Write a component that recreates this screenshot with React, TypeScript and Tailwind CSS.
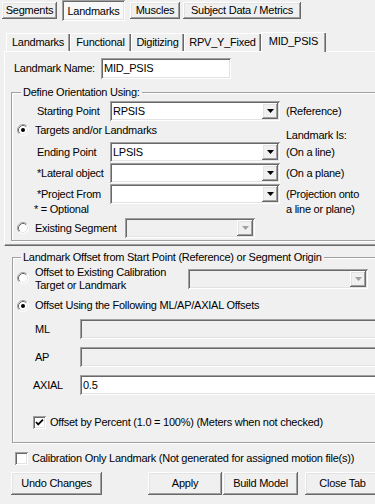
import React from "react";

const raised =
  "bg-[#f0f0f0] shadow-[inset_-1px_-1px_0_#696969,inset_1px_1px_0_#fff,inset_-2px_-2px_0_#a0a0a0,inset_2px_2px_0_#e3e3e3]";
const sunken =
  "shadow-[inset_1px_1px_0_#a0a0a0,inset_-1px_-1px_0_#fff,inset_2px_2px_0_#696969,inset_-2px_-2px_0_#e3e3e3]";
const etched = "border border-[#a0a0a0] shadow-[inset_1px_1px_0_#fff,1px_1px_0_#fff]";

function Radio({ checked = false }: { checked?: boolean }) {
  return (
    <svg width="12" height="12" viewBox="0 0 12 12" className="shrink-0">
      <circle cx="6" cy="6" r="5.5" fill="#fff" />
      <path d="M2.11 9.89 A5.5 5.5 0 0 1 9.89 2.11" fill="none" stroke="#a0a0a0" />
      <path d="M9.89 2.11 A5.5 5.5 0 0 1 2.11 9.89" fill="none" stroke="#fff" />
      <path d="M2.82 9.18 A4.5 4.5 0 0 1 9.18 2.82" fill="none" stroke="#696969" />
      <path d="M9.18 2.82 A4.5 4.5 0 0 1 2.82 9.18" fill="none" stroke="#e3e3e3" />
      {checked && <circle cx="6" cy="6" r="2" fill="#000" />}
    </svg>
  );
}

function Check({ checked = false }: { checked?: boolean }) {
  return (
    <div className={`w-[13px] h-[13px] bg-white shrink-0 ${sunken}`}>
      {checked && (
        <svg width="13" height="13" viewBox="0 0 13 13">
          <path d="M3 6 L5.2 8.4 L10 3.6" fill="none" stroke="#000" strokeWidth="1.7" />
        </svg>
      )}
    </div>
  );
}

function Combo({ value = "", width, disabled = false }: { value?: string; width: string; disabled?: boolean }) {
  return (
    <div className={`${width} h-[20px] flex p-[2px] shrink-0 ${disabled ? "bg-[#f0f0f0]" : "bg-white"} ${sunken}`}>
      <div className="flex-1 pl-[1px] leading-[16px] overflow-hidden whitespace-nowrap">{value}</div>
      <div className={`w-[16px] h-[16px] flex items-center justify-center ${raised}`}>
        <svg width="7" height="4" viewBox="0 0 7 4">
          <polygon points="0,0 7,0 3.5,4" fill={disabled ? "#a0a0a0" : "#000"} />
        </svg>
      </div>
    </div>
  );
}

function TextBox({ value = "", width, disabled = false }: { value?: string; width: string; disabled?: boolean }) {
  return (
    <div
      className={`${width} h-[20px] pl-[3px] leading-[20px] shrink-0 whitespace-nowrap ${disabled ? "bg-[#f0f0f0]" : "bg-white"} ${sunken}`}
    >
      {value}
    </div>
  );
}

function Button({ label, className = "" }: { label: string; className?: string }) {
  return (
    <div className={`h-[23px] flex items-center justify-center shrink-0 ${raised} ${className}`}>{label}</div>
  );
}

function Tab({ label, width, selected = false }: { label: string; width: string; selected?: boolean }) {
  return (
    <div
      className={`${width} ${
        selected ? "h-[20px] relative z-10 pb-[2px]" : "h-[19px]"
      } flex items-center justify-center bg-[#f0f0f0] shrink-0 shadow-[inset_1px_1px_0_#fff,inset_-1px_0_0_#696969,inset_-2px_0_0_#a0a0a0]`}
    >
      {label}
    </div>
  );
}

export default function App() {
  return (
    <div className="w-[375px] h-[504px] overflow-hidden bg-[#f0f0f0] text-black text-[11px] leading-[13px] tracking-[-0.25px] [font-family:'Liberation_Sans',Arial,sans-serif] flex flex-col">
      {/* top level tabs, drawn as buttons */}
      <div className="h-[21px] flex items-center pl-[2px] shrink-0">
        <div className={`w-[55px] h-[17px] flex items-center justify-center ${raised}`}>Segments</div>
        <div className={`ml-[5px] w-[63px] h-[21px] flex items-center justify-center pt-[1px] bg-[#f8f8f8] ${sunken}`}>
          Landmarks
        </div>
        <div className={`ml-[5px] w-[50px] h-[17px] flex items-center justify-center ${raised}`}>Muscles</div>
        <div className={`ml-[3px] w-[118px] h-[17px] flex items-center justify-center ${raised}`}>
          Subject Data / Metrics
        </div>
      </div>

      {/* landmark tabs */}
      <div className="mt-[11px] h-[20px] flex items-end pl-[6px] shrink-0">
        <Tab label="Landmarks" width="w-[64px]" />
        <Tab label="Functional" width="w-[61px]" />
        <Tab label="Digitizing" width="w-[53px]" />
        <Tab label="RPV_Y_Fixed" width="w-[77px]" />
        <Tab label="MID_PSIS" width="w-[65px]" selected />
      </div>

      {/* tab page */}
      <div className="-mt-[1px] ml-[4px] w-[390px] h-[195px] shrink-0 border-t border-l border-white border-b border-b-[#696969] shadow-[inset_0_-1px_0_#a0a0a0]">
        <div className="mt-[6px] h-[21px] flex items-center pl-[9px]">
          <div className="w-[87px]">Landmark Name:</div>
          <div className={`w-[130px] h-[21px] pl-[3px] leading-[21px] bg-white ${sunken}`}>MID_PSIS</div>
        </div>

        <div className={`relative mt-[13px] ml-[6px] w-[380px] h-[149px] ${etched}`}>
          <span className="absolute -top-[7px] left-[9px] px-[2px] bg-[#f0f0f0]">Define Orientation Using:</span>

          <div className="mt-[8px] h-[20px] flex items-center pl-[25px]">
            <div className="w-[73px]">Starting Point</div>
            <Combo value="RPSIS" width="w-[170px]" />
            <div className="ml-[6px]">(Reference)</div>
          </div>

          <div className="h-[21px] flex items-start">
            <div className="w-[274px] flex items-start">
              <div className="ml-[5px] mt-[3px]">
                <Radio checked />
              </div>
              <div className="ml-[6px] mt-[3px] w-[122px] overflow-hidden whitespace-nowrap">
                Targets and/or Landmarks
              </div>
            </div>
            <div className="mt-[8px]">Landmark Is:</div>
          </div>

          <div className="h-[20px] flex items-center pl-[25px]">
            <div className="w-[73px]">Ending Point</div>
            <Combo value="LPSIS" width="w-[170px]" />
            <div className="ml-[6px]">(On a line)</div>
          </div>

          <div className="mt-[1px] h-[20px] flex items-center pl-[25px]">
            <div className="w-[73px]">*Lateral object</div>
            <Combo width="w-[170px]" />
            <div className="ml-[6px]">(On a plane)</div>
          </div>

          <div className="mt-[1px] h-[20px] flex items-center pl-[25px]">
            <div className="w-[73px]">*Project From</div>
            <Combo width="w-[170px]" />
            <div className="ml-[6px]">(Projection onto</div>
          </div>

          <div className="-mt-[1px] h-[13px] flex">
            <div className="w-[274px] pl-[22px]">* = Optional</div>
            <div>a line or plane)</div>
          </div>

          <div className="mt-[2px] h-[20px] flex items-center">
            <div className="ml-[5px]">
              <Radio />
            </div>
            <div className="ml-[6px] w-[90px]">Existing Segment</div>
            <Combo width="w-[130px]" disabled />
          </div>
        </div>
      </div>

      {/* offset group */}
      <div className={`relative mt-[11px] ml-[12px] w-[380px] h-[186px] shrink-0 ${etched}`}>
        <span className="absolute -top-[7px] left-[8px] px-[2px] bg-[#f0f0f0] whitespace-nowrap">
          Landmark Offset from Start Point (Reference) or Segment Origin
        </span>

        <div className="mt-[8px] h-[26px] flex items-start">
          <div className="ml-[4px] mt-[6px]">
            <Radio />
          </div>
          <div className="ml-[6px] w-[153px]">
            <div>Offset to Existing Calibration</div>
            <div>Target or Landmark</div>
          </div>
          <div className="mt-[3px]">
            <Combo width="w-[180px]" disabled />
          </div>
        </div>

        <div className="mt-[7px] h-[13px] flex items-center">
          <div className="ml-[4px]">
            <Radio checked />
          </div>
          <div className="ml-[6px] whitespace-nowrap">Offset Using the Following ML/AP/AXIAL Offsets</div>
        </div>

        <div className="mt-[7px] h-[20px] flex items-center">
          <div className="w-[67px] pl-[22px]">ML</div>
          <TextBox width="w-[300px]" disabled />
        </div>

        <div className="mt-[8px] h-[20px] flex items-center">
          <div className="w-[67px] pl-[22px]">AP</div>
          <TextBox width="w-[300px]" disabled />
        </div>

        <div className="mt-[8px] h-[20px] flex items-center">
          <div className="w-[67px] pl-[20px]">AXIAL</div>
          <TextBox value="0.5" width="w-[300px]" />
        </div>

        <div className="mt-[21px] h-[13px] flex items-center">
          <div className="ml-[20px]">
            <Check checked />
          </div>
          <div className="ml-[4px] whitespace-nowrap">Offset by Percent (1.0 = 100%) (Meters when not checked)</div>
        </div>
      </div>

      <div className="mt-[9px] h-[13px] flex items-center ml-[15px] shrink-0">
        <Check />
        <div className="ml-[4px] whitespace-nowrap">
          Calibration Only Landmark (Not generated for assigned motion file(s))
        </div>
      </div>

      <div className="mt-[7px] h-[23px] flex pl-[11px] shrink-0">
        <Button label="Undo Changes" className="w-[91px]" />
        <Button label="Apply" className="ml-[46px] w-[74px]" />
        <Button label="Build Model" className="ml-[1px] w-[75px]" />
        <Button label="Close Tab" className="ml-[7px] w-[75px]" />
      </div>
    </div>
  );
}
